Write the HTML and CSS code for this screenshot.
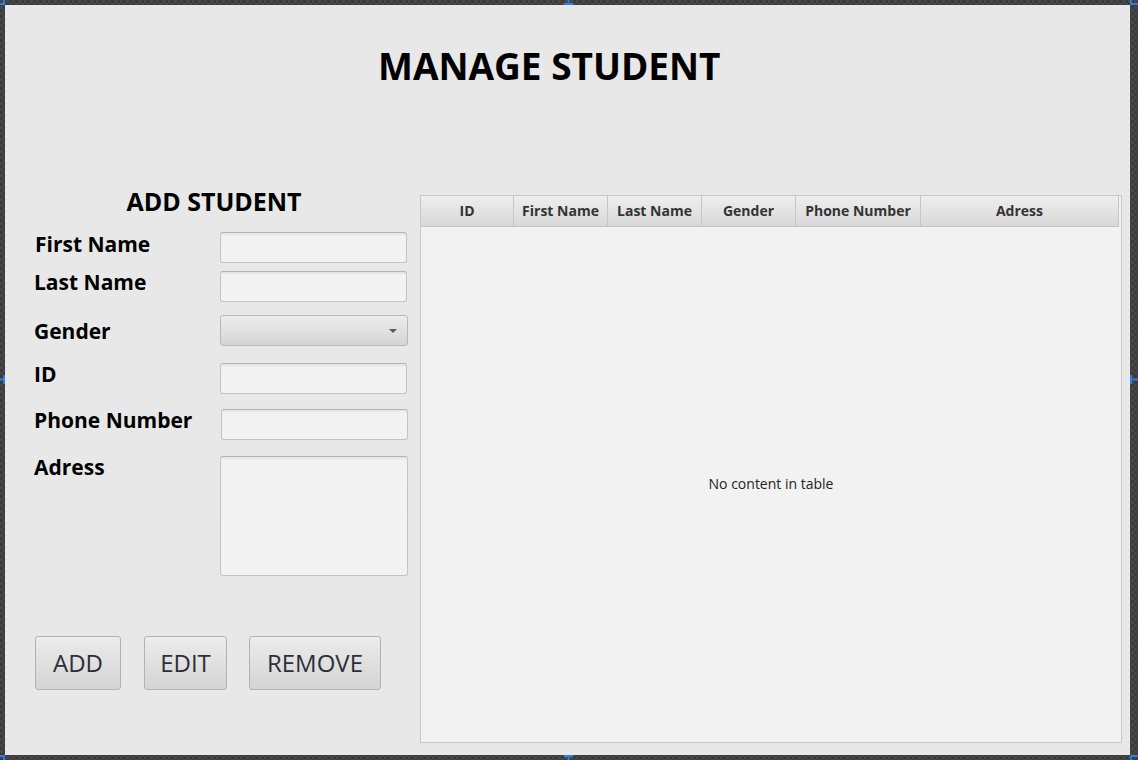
FILE: index.html
```html
<!DOCTYPE html>
<html lang="en">
<head>
<meta charset="utf-8">
<title>Manage Student</title>
<link rel="stylesheet" href="styles.css">
</head>
<body>
<div class="stage">
  <div class="pane">
    <h1 class="title">MANAGE STUDENT</h1>
    <div class="content">
      <div class="form-col">
        <h2 class="subtitle">ADD STUDENT</h2>
        <div class="row row-first">
          <label class="lbl">First Name</label>
          <div class="field"></div>
        </div>
        <div class="row row-last">
          <label class="lbl">Last Name</label>
          <div class="field"></div>
        </div>
        <div class="row row-gender">
          <label class="lbl lbl-gender">Gender</label>
          <div class="combo"><span class="arrow"></span></div>
        </div>
        <div class="row row-id">
          <label class="lbl">ID</label>
          <div class="field"></div>
        </div>
        <div class="row row-phone">
          <label class="lbl">Phone Number</label>
          <div class="field field-phone"></div>
        </div>
        <div class="row row-adress">
          <label class="lbl">Adress</label>
          <div class="field area"></div>
        </div>
        <div class="buttons">
          <button class="btn btn-add">ADD</button>
          <button class="btn btn-edit">EDIT</button>
          <button class="btn btn-remove">REMOVE</button>
        </div>
      </div>
      <div class="table">
        <div class="thead">
          <div class="th th-id">ID</div>
          <div class="th th-std">First Name</div>
          <div class="th th-std">Last Name</div>
          <div class="th th-std">Gender</div>
          <div class="th th-phone">Phone Number</div>
          <div class="th th-adress">Adress</div>
        </div>
        <div class="tbody">No content in table</div>
      </div>
    </div>
  </div>
  <svg class="handles" width="1138" height="760" viewBox="0 0 1138 760" aria-hidden="true">
    <g fill="none" stroke="#2b7de9" stroke-width="2">
      <path d="M0 4 H4 V0"/>
      <path d="M564 4 H573 M568.5 4 V0"/>
      <path d="M1131 0 V4 H1138"/>
      <path d="M1131 375 V384 M1131 379.5 H1138"/>
      <path d="M1131 760 V756 H1138"/>
      <path d="M564 756 H573 M568.5 756 V760"/>
      <path d="M0 756 H4 V760"/>
      <path d="M4 375 V384 M4 379.5 H0"/>
    </g>
  </svg>
</div>
</body>
</html>
```
FILE: styles.css
```css
html, body {
  margin: 0;
  padding: 0;
}
body {
  width: 1138px;
  height: 760px;
  overflow: hidden;
  background-color: #414141;
  background-image: conic-gradient(#3a3a3a 25%, #484848 0 50%, #3a3a3a 0 75%, #484848 0);
  background-size: 6px 6px;
  font-family: "Open Sans", "Noto Sans", sans-serif;
}
.stage {
  position: relative;
  width: 1138px;
  height: 760px;
  box-sizing: border-box;
  padding: 5px 8px 5px 5px;
}
.pane {
  height: 750px;
  background: #e8e8e8;
  overflow: hidden;
}
.title {
  margin: 0;
  padding: 41px 0 0 373px;
  font-size: 37px;
  line-height: 40px;
  font-weight: 700;
  color: #000;
}
.content {
  display: flex;
  align-items: flex-start;
  margin-top: 101px;
  padding-left: 15px;
}
.form-col {
  width: 388px;
  margin-right: 12px;
}
.subtitle {
  margin: 0;
  text-align: center;
  font-size: 25px;
  line-height: 28px;
  font-weight: 700;
  color: #000;
}
.row {
  display: flex;
  align-items: flex-start;
}
.row-first { margin-top: 17px; }
.row-last { margin-top: 8px; }
.row-gender { margin-top: 13px; }
.row-id { margin-top: 17px; }
.row-phone { margin-top: 15px; }
.row-adress { margin-top: 16px; }
.lbl {
  width: 200px;
  box-sizing: border-box;
  padding-left: 15px;
  font-size: 21px;
  line-height: 24px;
  font-weight: 700;
  color: #000;
}
.row-last .lbl, .row-gender .lbl, .row-id .lbl, .row-phone .lbl, .row-adress .lbl { padding-left: 14px; margin-top: -1px; }
.row-gender .lbl-gender { margin-top: 4px; }
.field {
  width: 187px;
  height: 31px;
  box-sizing: border-box;
  border: 1px solid #c4c4c4;
  border-top-color: #b4b4b4;
  border-radius: 3px;
  background: linear-gradient(#e2e2e2 0, #f2f2f2 3px, #f3f3f3 100%);
}
.field-phone { margin-left: 1px; }
.area {
  height: 120px;
  width: 188px;
}
.combo {
  position: relative;
  width: 188px;
  height: 31px;
  box-sizing: border-box;
  border: 1px solid #b9b9b9;
  border-radius: 3px;
  background: linear-gradient(#ececec, #d5d5d5);
}
.arrow {
  position: absolute;
  right: 10px;
  top: 13px;
  width: 0;
  height: 0;
  border-left: 4px solid transparent;
  border-right: 4px solid transparent;
  border-top: 4px solid #5a5a5a;
}
.buttons {
  display: flex;
  margin-top: 60px;
  padding-left: 15px;
}
.btn {
  height: 54px;
  padding: 0 0 2px;
  box-sizing: border-box;
  border: 1px solid #b3b3b3;
  border-radius: 3px;
  background: linear-gradient(#ececec, #d4d4d4);
  font-family: "Open Sans", "Noto Sans", sans-serif;
  font-size: 24px;
  color: #2e2e38;
}
.btn-add { width: 86px; }
.btn-edit { width: 83px; margin-left: 23px; }
.btn-remove { width: 132px; margin-left: 22px; }
.table {
  width: 702px;
  height: 548px;
  margin-top: 8px;
  box-sizing: border-box;
  border: 1px solid #c8c8c8;
  background: #f2f2f2;
  display: flex;
  flex-direction: column;
}
.thead {
  display: flex;
  width: 698px;
  height: 31px;
  box-sizing: border-box;
  border-bottom: 1px solid #c4c4c4;
  background: linear-gradient(#eeeeee, #d8d8d8);
}
.th {
  box-sizing: border-box;
  border-right: 1px solid #c6c6c6;
  display: flex;
  align-items: center;
  justify-content: center;
  padding-bottom: 2px;
  font-size: 14px;
  font-weight: 700;
  color: #333;
}
.th-id { width: 93px; }
.th-std { width: 94px; }
.th-phone { width: 125px; }
.th-adress { width: 198px; }
.tbody {
  flex: 1;
  display: flex;
  align-items: center;
  justify-content: center;
  padding-bottom: 2px;
  font-size: 14px;
  color: #222;
}
.handles {
  position: absolute;
  left: 0;
  top: 0;
  pointer-events: none;
}
```
